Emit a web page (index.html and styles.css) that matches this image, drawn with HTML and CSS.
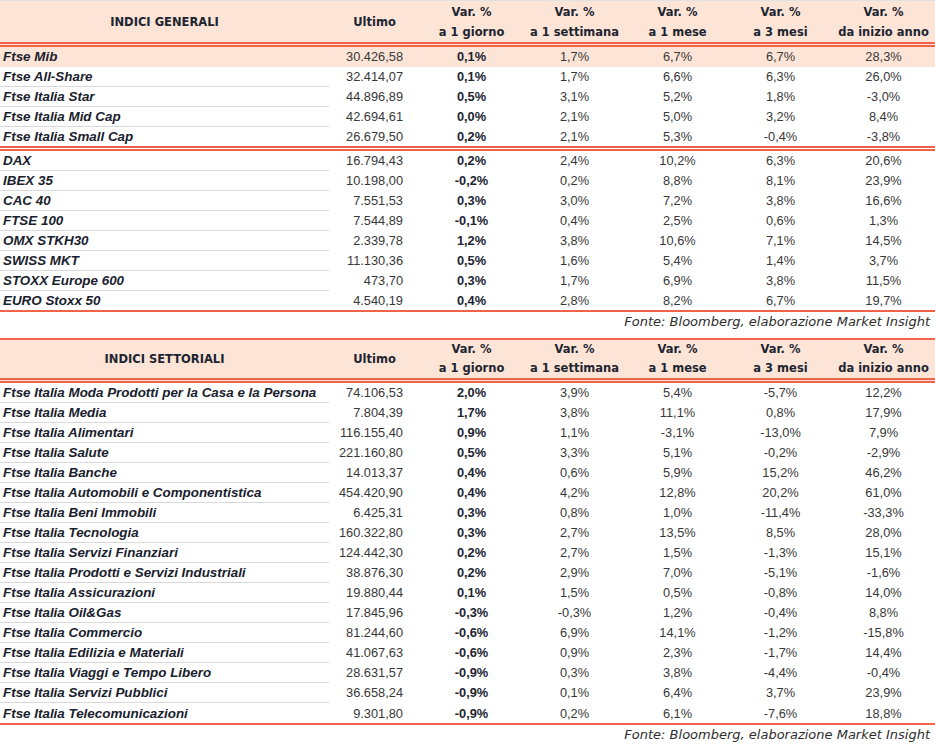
FILE: index.html
```html
<!DOCTYPE html>
<html lang="it">
<head>
<meta charset="utf-8">
<title>Indici</title>
<link rel="stylesheet" href="styles.css">
</head>
<body>
<div class="page">
  <table class="tbl tbl-first">
    <colgroup>
      <col class="c-name"><col class="c-last"><col class="c-var"><col class="c-var"><col class="c-var"><col class="c-var"><col class="c-var">
    </colgroup>
    <thead>
      <tr class="head">
        <th>INDICI GENERALI</th>
        <th>Ultimo</th>
        <th>Var. %<br>a 1 giorno</th>
        <th>Var. %<br>a 1 settimana</th>
        <th>Var. %<br>a 1 mese</th>
        <th>Var. %<br>a 3 mesi</th>
        <th>Var. %<br>da inizio anno</th>
      </tr>
    </thead>
    <tbody>
      <tr class="hl"><td class="name">Ftse Mib</td><td class="last">30.426,58</td><td class="day">0,1%</td><td>1,7%</td><td>6,7%</td><td>6,7%</td><td>28,3%</td></tr>
      <tr><td class="name">Ftse All-Share</td><td class="last">32.414,07</td><td class="day">0,1%</td><td>1,7%</td><td>6,6%</td><td>6,3%</td><td>26,0%</td></tr>
      <tr><td class="name">Ftse Italia Star</td><td class="last">44.896,89</td><td class="day">0,5%</td><td>3,1%</td><td>5,2%</td><td>1,8%</td><td>-3,0%</td></tr>
      <tr><td class="name">Ftse Italia Mid Cap</td><td class="last">42.694,61</td><td class="day">0,0%</td><td>2,1%</td><td>5,0%</td><td>3,2%</td><td>8,4%</td></tr>
      <tr class="sep"><td class="name">Ftse Italia Small Cap</td><td class="last">26.679,50</td><td class="day">0,2%</td><td>2,1%</td><td>5,3%</td><td>-0,4%</td><td>-3,8%</td></tr>
      <tr><td class="name">DAX</td><td class="last">16.794,43</td><td class="day">0,2%</td><td>2,4%</td><td>10,2%</td><td>6,3%</td><td>20,6%</td></tr>
      <tr><td class="name">IBEX 35</td><td class="last">10.198,00</td><td class="day">-0,2%</td><td>0,2%</td><td>8,8%</td><td>8,1%</td><td>23,9%</td></tr>
      <tr><td class="name">CAC 40</td><td class="last">7.551,53</td><td class="day">0,3%</td><td>3,0%</td><td>7,2%</td><td>3,8%</td><td>16,6%</td></tr>
      <tr><td class="name">FTSE 100</td><td class="last">7.544,89</td><td class="day">-0,1%</td><td>0,4%</td><td>2,5%</td><td>0,6%</td><td>1,3%</td></tr>
      <tr><td class="name">OMX STKH30</td><td class="last">2.339,78</td><td class="day">1,2%</td><td>3,8%</td><td>10,6%</td><td>7,1%</td><td>14,5%</td></tr>
      <tr><td class="name">SWISS MKT</td><td class="last">11.130,36</td><td class="day">0,5%</td><td>1,6%</td><td>5,4%</td><td>1,4%</td><td>3,7%</td></tr>
      <tr><td class="name">STOXX Europe 600</td><td class="last">473,70</td><td class="day">0,3%</td><td>1,7%</td><td>6,9%</td><td>3,8%</td><td>11,5%</td></tr>
      <tr class="end"><td class="name">EURO Stoxx 50</td><td class="last">4.540,19</td><td class="day">0,4%</td><td>2,8%</td><td>8,2%</td><td>6,7%</td><td>19,7%</td></tr>
    </tbody>
  </table>
  <p class="source source-first">Fonte: Bloomberg, elaborazione Market Insight</p>

  <table class="tbl tbl-second">
    <colgroup>
      <col class="c-name"><col class="c-last"><col class="c-var"><col class="c-var"><col class="c-var"><col class="c-var"><col class="c-var">
    </colgroup>
    <thead>
      <tr class="head">
        <th>INDICI SETTORIALI</th>
        <th>Ultimo</th>
        <th>Var. %<br>a 1 giorno</th>
        <th>Var. %<br>a 1 settimana</th>
        <th>Var. %<br>a 1 mese</th>
        <th>Var. %<br>a 3 mesi</th>
        <th>Var. %<br>da inizio anno</th>
      </tr>
    </thead>
    <tbody>
      <tr><td class="name">Ftse Italia Moda Prodotti per la Casa e la Persona</td><td class="last">74.106,53</td><td class="day">2,0%</td><td>3,9%</td><td>5,4%</td><td>-5,7%</td><td>12,2%</td></tr>
      <tr><td class="name">Ftse Italia Media</td><td class="last">7.804,39</td><td class="day">1,7%</td><td>3,8%</td><td>11,1%</td><td>0,8%</td><td>17,9%</td></tr>
      <tr><td class="name">Ftse Italia Alimentari</td><td class="last">116.155,40</td><td class="day">0,9%</td><td>1,1%</td><td>-3,1%</td><td>-13,0%</td><td>7,9%</td></tr>
      <tr><td class="name">Ftse Italia Salute</td><td class="last">221.160,80</td><td class="day">0,5%</td><td>3,3%</td><td>5,1%</td><td>-0,2%</td><td>-2,9%</td></tr>
      <tr><td class="name">Ftse Italia Banche</td><td class="last">14.013,37</td><td class="day">0,4%</td><td>0,6%</td><td>5,9%</td><td>15,2%</td><td>46,2%</td></tr>
      <tr><td class="name">Ftse Italia Automobili e Componentistica</td><td class="last">454.420,90</td><td class="day">0,4%</td><td>4,2%</td><td>12,8%</td><td>20,2%</td><td>61,0%</td></tr>
      <tr><td class="name">Ftse Italia Beni Immobili</td><td class="last">6.425,31</td><td class="day">0,3%</td><td>0,8%</td><td>1,0%</td><td>-11,4%</td><td>-33,3%</td></tr>
      <tr><td class="name">Ftse Italia Tecnologia</td><td class="last">160.322,80</td><td class="day">0,3%</td><td>2,7%</td><td>13,5%</td><td>8,5%</td><td>28,0%</td></tr>
      <tr><td class="name">Ftse Italia Servizi Finanziari</td><td class="last">124.442,30</td><td class="day">0,2%</td><td>2,7%</td><td>1,5%</td><td>-1,3%</td><td>15,1%</td></tr>
      <tr><td class="name">Ftse Italia Prodotti e Servizi Industriali</td><td class="last">38.876,30</td><td class="day">0,2%</td><td>2,9%</td><td>7,0%</td><td>-5,1%</td><td>-1,6%</td></tr>
      <tr><td class="name">Ftse Italia Assicurazioni</td><td class="last">19.880,44</td><td class="day">0,1%</td><td>1,5%</td><td>0,5%</td><td>-0,8%</td><td>14,0%</td></tr>
      <tr><td class="name">Ftse Italia Oil&amp;Gas</td><td class="last">17.845,96</td><td class="day">-0,3%</td><td>-0,3%</td><td>1,2%</td><td>-0,4%</td><td>8,8%</td></tr>
      <tr><td class="name">Ftse Italia Commercio</td><td class="last">81.244,60</td><td class="day">-0,6%</td><td>6,9%</td><td>14,1%</td><td>-1,2%</td><td>-15,8%</td></tr>
      <tr><td class="name">Ftse Italia Edilizia e Materiali</td><td class="last">41.067,63</td><td class="day">-0,6%</td><td>0,9%</td><td>2,3%</td><td>-1,7%</td><td>14,4%</td></tr>
      <tr><td class="name">Ftse Italia Viaggi e Tempo Libero</td><td class="last">28.631,57</td><td class="day">-0,9%</td><td>0,3%</td><td>3,8%</td><td>-4,4%</td><td>-0,4%</td></tr>
      <tr><td class="name">Ftse Italia Servizi Pubblici</td><td class="last">36.658,24</td><td class="day">-0,9%</td><td>0,1%</td><td>6,4%</td><td>3,7%</td><td>23,9%</td></tr>
      <tr class="end"><td class="name">Ftse Italia Telecomunicazioni</td><td class="last">9.301,80</td><td class="day">-0,9%</td><td>0,2%</td><td>6,1%</td><td>-7,6%</td><td>18,8%</td></tr>
    </tbody>
  </table>
  <p class="source source-second">Fonte: Bloomberg, elaborazione Market Insight</p>
</div>
</body>
</html>
```

FILE: styles.css
```css
html, body {
  margin: 0;
  padding: 0;
  background: #ffffff;
}

.page {
  width: 935px;
  border-top: 1px solid #e2e2e2;
}

.tbl {
  width: 935px;
  table-layout: fixed;
  border-collapse: separate;
  border-spacing: 0;
}

.c-name { width: 329px; }
.c-last { width: 91px; }
.c-var { width: 103px; }

.head th {
  background: #fce4d6;
  color: #1d2531;
  font-family: "DejaVu Sans", sans-serif;
  font-weight: bold;
  font-size: 11.5px;
  line-height: 20px;
  padding: 1px 0 0;
  text-align: center;
  vertical-align: middle;
  border-bottom: 5px double #f0634a;
  white-space: nowrap;
}

.tbl-second .head th {
  line-height: 19px;
  padding: 0;
  border-top: 2px solid #f0634a;
}

.tbl td {
  padding: 1px 0 0;
  height: 18px;
  line-height: 18px;
  border-bottom: 1px solid transparent;
  text-align: center;
  color: #383838;
  font-family: "Liberation Sans", Arial, sans-serif;
  font-size: 12.8px;
  white-space: nowrap;
  vertical-align: middle;
}

.tbl td.name {
  text-align: left;
  padding-left: 3px;
  color: #19212d;
  font-family: "Liberation Sans", Arial, sans-serif;
  font-weight: bold;
  font-style: italic;
  font-size: 13.4px;
  border-bottom-color: #d9d9d9;
}

.tbl td.last {
  text-align: right;
  padding-right: 17px;
}

.tbl td.day {
  font-weight: bold;
  color: #1d2531;
}

.tbl tr.hl td {
  background: #fce4d6;
  border-bottom-color: transparent;
}

.tbl tr.sep td {
  border-bottom: 5px double #f0634a;
}

.tbl tr.end td {
  border-bottom: 2px solid #f0634a;
}

.tbl-second tr.end td {
  height: 19px;
  line-height: 19px;
}

.source {
  margin: 0;
  text-align: right;
  padding-right: 5px;
  color: #2e2e2e;
  font-family: "DejaVu Sans", sans-serif;
  font-style: italic;
  font-size: 13px;
  line-height: 19px;
  white-space: nowrap;
}

.source-first {
  margin-bottom: 7px;
}

.source-second {
  line-height: 20px;
}
```
